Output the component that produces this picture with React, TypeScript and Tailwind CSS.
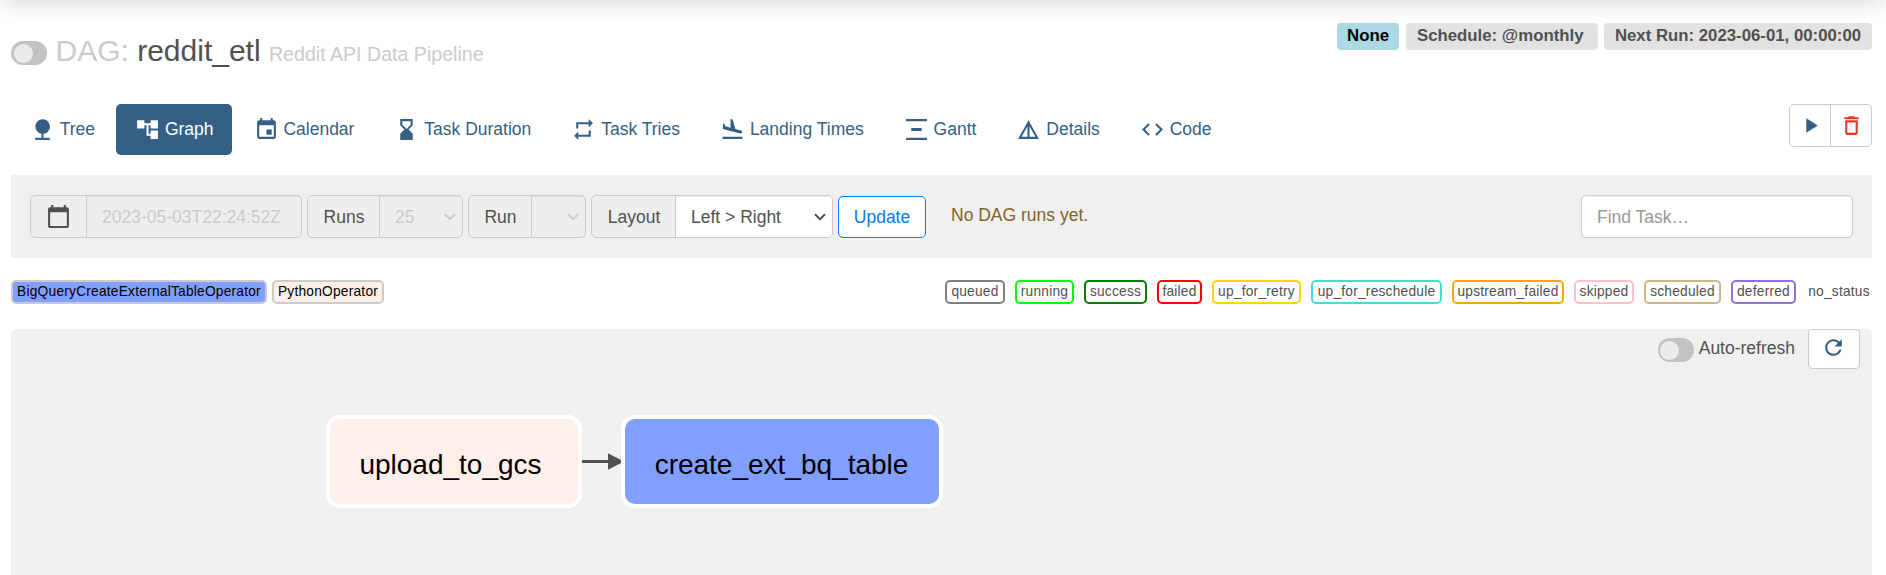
import React from "react";
import type { IconType } from "react-icons";
import {
  MdNature,
  MdAccountTree,
  MdEvent,
  MdHourglassBottom,
  MdRepeat,
  MdFlightLand,
  MdVerticalDistribute,
  MdDetails,
  MdCode,
  MdPlayArrow,
  MdDeleteOutline,
  MdCalendarToday,
  MdRefresh,
} from "react-icons/md";

const tabs: { label: string; icon: IconType; active?: boolean }[] = [
  { label: "Tree", icon: MdNature },
  { label: "Graph", icon: MdAccountTree, active: true },
  { label: "Calendar", icon: MdEvent },
  { label: "Task Duration", icon: MdHourglassBottom },
  { label: "Task Tries", icon: MdRepeat },
  { label: "Landing Times", icon: MdFlightLand },
  { label: "Gantt", icon: MdVerticalDistribute },
  { label: "Details", icon: MdDetails },
  { label: "Code", icon: MdCode },
];

const states = [
  { name: "queued", cls: "w-[60px] border-[gray]" },
  { name: "running", cls: "w-[59px] border-[lime]" },
  { name: "success", cls: "w-[63px] border-[green]" },
  { name: "failed", cls: "w-[45px] border-[red]" },
  { name: "up_for_retry", cls: "w-[89px] border-[gold]" },
  { name: "up_for_reschedule", cls: "w-[131px] border-[turquoise]" },
  { name: "upstream_failed", cls: "w-[112px] border-[orange]" },
  { name: "skipped", cls: "w-[60px] border-[pink]" },
  { name: "scheduled", cls: "w-[77px] border-[tan]" },
  { name: "deferred", cls: "w-[65px] border-[mediumpurple]" },
  { name: "no_status", cls: "w-[66px] border-white" },
];

function Toggle() {
  return (
    <span className="flex h-6 w-9 shrink-0 items-center rounded-full bg-[#c4c2c1] pl-[2.5px]">
      <span className="h-[19px] w-[19px] rounded-full bg-[#ebebeb]" />
    </span>
  );
}

function Chevron({ className }: { className: string }) {
  return (
    <svg viewBox="0 0 12 8" className={`h-2 w-3 shrink-0 ${className}`} fill="none" stroke="currentColor" strokeWidth="2">
      <path d="M1 1.2l5 5 5-5" />
    </svg>
  );
}

function Group({
  label,
  value,
  width,
  labelWidth,
  enabled,
}: {
  label: string;
  value: string;
  width: string;
  labelWidth: string;
  enabled?: boolean;
}) {
  return (
    <div className={`flex h-[43px] overflow-hidden rounded-[5px] border border-[#cbcbcb] bg-[#eeeeee] ${width}`}>
      <span className={`flex items-center justify-center border-r border-[#cbcbcb] pl-px pt-px ${labelWidth}`}>{label}</span>
      <span
        className={`flex flex-1 items-center justify-between pl-[15px] pr-[6px] pt-px shadow-[inset_0_1px_1px_rgba(0,0,0,0.075)] ${
          enabled ? "bg-white" : "text-[#cbcbcb]"
        }`}
      >
        <span>{value}</span>
        <Chevron className={enabled ? "text-[#51504f]" : "text-[#cbcbcb]"} />
      </span>
    </div>
  );
}

export default function App() {
  return (
    <div className="relative flex h-[575px] w-[1886px] flex-col overflow-hidden bg-white pl-[11px] pr-[14px] font-['Liberation_Sans',Arial,sans-serif] text-[17.5px] leading-[25px] text-[#51504f]">
      <div className="absolute -top-5 left-0 h-5 w-full shadow-[0_0_25px_rgba(0,0,0,0.2)]" />

      <header className="flex h-[104px] shrink-0 items-start justify-between">
        <div className="flex pt-[41px]">
          <Toggle />
          <h3 className="-mt-[7px] ml-[8.5px] whitespace-pre text-[30px] leading-[34px]">
            <span className="text-[#cbcbcb]">DAG:</span> reddit_etl{" "}
            <span className="text-[19.6px] text-[#cbcbcb]">Reddit API Data Pipeline</span>
          </h3>
        </div>
        <div className="flex pt-[23px] text-[16.8px] font-bold">
          <span className="h-[27px] w-[62px] rounded-[4px] bg-[lightblue] text-center text-black">None</span>
          <span className="ml-[7px] h-[27px] w-[192px] rounded-[4px] bg-[#e2e2e2] pl-[11px]">Schedule: @monthly</span>
          <span className="ml-[6px] h-[27px] w-[268px] rounded-[4px] bg-[#e2e2e2] text-center">
            Next Run: 2023-06-01, 00:00:00
          </span>
        </div>
      </header>

      <div className="flex h-[71px] shrink-0 items-start justify-between">
        <nav className="flex gap-[2.5px]">
          {tabs.map(({ label, icon: Icon, active }) => (
            <a
              key={label}
              className={`flex h-[51px] items-center gap-[4.9px] rounded-[5px] px-[18.75px] ${
                active ? "bg-[#355f84] text-white" : "text-[#355f84]"
              }`}
            >
              <Icon className="h-[25px] w-[25px]" />
              <span>{label}</span>
            </a>
          ))}
        </nav>
        <div className="flex h-[43px] w-[83px] rounded-[5px] border border-[#cbcbcb]">
          <span className="flex w-[41px] items-center justify-center border-r border-[#cbcbcb] text-[#355f84]">
            <MdPlayArrow className="h-[25px] w-[25px]" />
          </span>
          <span className="flex flex-1 items-center justify-center text-[#e43921]">
            <MdDeleteOutline className="h-[25px] w-[25px]" />
          </span>
        </div>
      </div>

      <div className="flex h-[83px] shrink-0 items-start gap-[5px] bg-[#f0f0f0] px-[19px] pt-5">
        <div className="flex h-[43px] w-[272px] overflow-hidden rounded-[5px] border border-[#cbcbcb] bg-[#eeeeee]">
          <span className="flex w-[56px] items-center justify-center border-r border-[#cbcbcb]">
            <MdCalendarToday className="h-[25px] w-[25px]" />
          </span>
          <span className="flex flex-1 items-center pl-[15px] pt-px text-[#cbcbcb] shadow-[inset_0_1px_1px_rgba(0,0,0,0.075)]">
            2023-05-03T22:24:52Z
          </span>
        </div>
        <Group label="Runs" value="25" width="w-[156px]" labelWidth="w-[72px]" />
        <Group label="Run" value="" width="w-[118px]" labelWidth="w-[63px]" />
        <Group label="Layout" value="Left > Right" width="w-[242px]" labelWidth="w-[84px]" enabled />
        <button className="mt-px h-[42px] w-[88px] rounded-[5px] border border-[#017cee] bg-white text-[#017cee]">
          Update
        </button>
        <span className="ml-5 mt-[8px] text-[#836329]">No DAG runs yet.</span>
        <div className="ml-auto flex h-[43px] w-[272px] items-center rounded-[5px] border border-[#cbcbcb] bg-white pl-[15px] pt-px text-[#999999] shadow-[inset_0_1px_1px_rgba(0,0,0,0.075)]">
          Find Task…
        </div>
      </div>

      <div className="flex h-[71px] shrink-0 items-start justify-between pt-[22px] text-[13.75px] leading-[19px] tracking-[0.22px]">
        <div className="flex gap-[5px] text-black">
          <span className="h-6 w-[256px] rounded-[5px] border-2 border-[#cbcbcb] bg-[#819fff] text-center">
            BigQueryCreateExternalTableOperator
          </span>
          <span className="h-6 w-[112px] rounded-[5px] border-2 border-[#cbcbcb] bg-[#ffefeb] text-center">
            PythonOperator
          </span>
        </div>
        <div className="flex gap-[10px]">
          {states.map((s) => (
            <span key={s.name} className={`h-6 rounded-[5px] border-2 text-center ${s.cls}`}>
              {s.name}
            </span>
          ))}
        </div>
      </div>

      <main className="relative flex flex-1 items-start justify-end rounded-t-[5px] bg-[#f0f0f0] pr-3">
        <div className="mt-[9px]">
          <Toggle />
        </div>
        <span className="ml-[5px] mt-[7px]">Auto-refresh</span>
        <button className="ml-[13px] flex h-10 w-[52px] items-center justify-center rounded-[4px] border border-[#cbcbcb] bg-white pb-[3px] pr-[2px] text-[#355f84]">
          <MdRefresh className="h-[25px] w-[25px]" />
        </button>

        <div className="absolute left-[315px] top-[86px] flex h-[93px] w-[256px] items-center justify-center rounded-[14px] border-4 border-white bg-[#ffefeb] pr-[7px] pt-[6px] text-[28px] leading-8 text-black">
          upload_to_gcs
        </div>
        <svg className="absolute left-[571px] top-[122px] h-5 w-[40px]" viewBox="0 0 40 20" fill="#51504f">
          <path d="M0 9h28v3H0z" />
          <path d="M26 2.2L42 10.5 26 18.8z" />
        </svg>
        <div className="absolute left-[610px] top-[86px] flex h-[93px] w-[322px] items-center justify-center rounded-[14px] border-4 border-white bg-[#819fff] pr-px pt-[6px] text-[28px] leading-8 text-black">
          create_ext_bq_table
        </div>
      </main>
    </div>
  );
}
